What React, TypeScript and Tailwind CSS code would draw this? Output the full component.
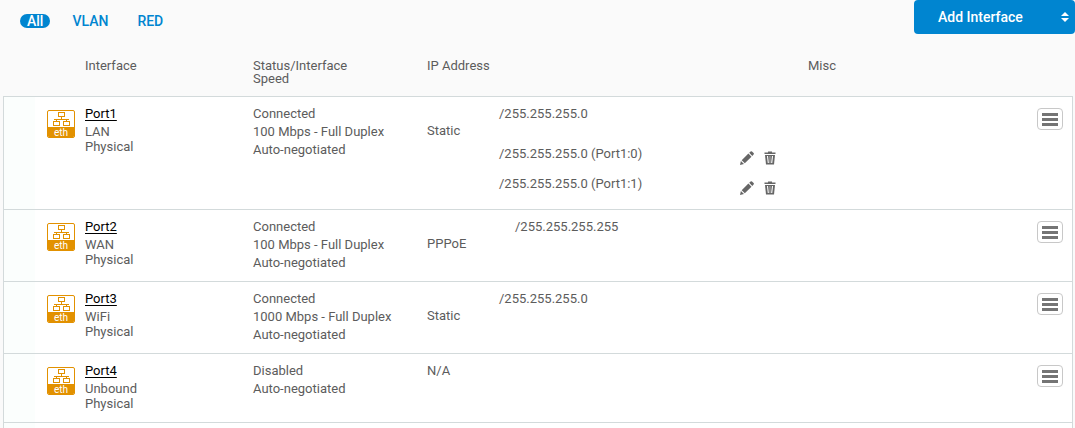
import React, { useState } from "react";
import clsx from "clsx";

interface Alias {
  address: string;
}

interface PortRecord {
  name: string;
  zone: string;
  type: string;
  status: string[];
  mode: string;
  address?: string;
  indent?: boolean;
  aliases: Alias[];
}

const ports: PortRecord[] = [
  {
    name: "Port1",
    zone: "LAN",
    type: "Physical",
    status: ["Connected", "100 Mbps - Full Duplex", "Auto-negotiated"],
    mode: "Static",
    address: "/255.255.255.0",
    aliases: [
      { address: "/255.255.255.0 (Port1:0)" },
      { address: "/255.255.255.0 (Port1:1)" },
    ],
  },
  {
    name: "Port2",
    zone: "WAN",
    type: "Physical",
    status: ["Connected", "100 Mbps - Full Duplex", "Auto-negotiated"],
    mode: "PPPoE",
    address: "/255.255.255.255",
    indent: true,
    aliases: [],
  },
  {
    name: "Port3",
    zone: "WiFi",
    type: "Physical",
    status: ["Connected", "1000 Mbps - Full Duplex", "Auto-negotiated"],
    mode: "Static",
    address: "/255.255.255.0",
    aliases: [],
  },
  {
    name: "Port4",
    zone: "Unbound",
    type: "Physical",
    status: ["Disabled", "Auto-negotiated"],
    mode: "N/A",
    aliases: [],
  },
];

const filters = ["All", "VLAN", "RED"];

const EthIcon: React.FC = () => (
  <span className="block size-7 rounded-xs border border-[#e29100] bg-white overflow-hidden">
    <svg viewBox="0 0 26 16" className="block w-full h-4" fill="none" stroke="#e29100" shapeRendering="crispEdges">
      <path d="M10.5 1.5h6v4h-6zM5.5 10.5h6v4h-6zM15.5 10.5h6v4h-6z" />
      <path d="M13.5 6v2M6 8.5h15M8.5 8v2M18.5 8v2" />
    </svg>
    <span className="block h-[10px] bg-[#e29100] text-white text-[10px] leading-[11px] text-center">eth</span>
  </span>
);

const PencilIcon: React.FC = () => (
  <svg viewBox="0 0 14 14" className="size-3.5" fill="#666">
    <path d="M0 14l.9-4L4 13.100zM1.700 9.200L8.400 2.600l3.100 3.100-6.700 6.600zM9.200 1.800L10.600.5q.7-.6 1.400 0l1.600 1.600q.6.7 0 1.400L12.300 4.900z" />
  </svg>
);

const TrashIcon: React.FC = () => (
  <svg viewBox="0 0 12 14" className="w-3 h-3.5">
    <path d="M.5 1.500h3.500V.5h4v1h3.500v1.500H.5z" fill="#666" />
    <path d="M1 4h10l-1 9.500H2z" fill="#666" />
    <path d="M3.500 5l.8 7M8.500 5l-.8 7" stroke="#fff" strokeWidth="1.1" />
    <path d="M6 5v7" stroke="#fff" strokeWidth=".5" />
  </svg>
);

const PortRow: React.FC<{ port: PortRecord }> = ({ port }) => (
  <tr className="bg-white align-top leading-[18px]">
    <td className="border-b border-l border-[#d3dadb] bg-[#fbfefd]"></td>
    <td className="border-b border-[#d3dadb] pt-[13px] pl-3">
      <EthIcon />
    </td>
    <td className="border-b border-[#d3dadb] pt-2 pb-[11px]">
      <a href="#" className="block w-fit text-black underline underline-offset-2">
        {port.name}
      </a>
      <div className="mt-px leading-[15px]">{port.zone}</div>
      <div className="leading-[15px]">{port.type}</div>
    </td>
    <td className="border-b border-[#d3dadb] pt-2 pb-[9px]">
      {port.status.map((line) => (
        <div key={line}>{line}</div>
      ))}
    </td>
    <td className={clsx("border-b border-[#d3dadb]", port.address ? "pt-[25px]" : "pt-2")}>{port.mode}</td>
    <td className="border-b border-[#d3dadb] pt-2 pb-[10px]">
      {port.address && <div className={clsx(port.indent && "pl-4")}>{port.address}</div>}
      {port.aliases.length > 0 && (
        <ul className="mt-4">
          {port.aliases.map((a) => (
            <li key={a.address} className="flex h-[30px] items-center">
              <span className="w-[241px]">{a.address}</span>
              <span className="flex items-center gap-[10px] pt-2">
                <button type="button" aria-label={"Edit " + a.address}>
                  <PencilIcon />
                </button>
                <button type="button" aria-label={"Delete " + a.address}>
                  <TrashIcon />
                </button>
              </span>
            </li>
          ))}
        </ul>
      )}
    </td>
    <td className="border-b border-r border-[#d3dadb] pt-[11px] pr-[9px]">
      <button
        type="button"
        aria-label={"Menu for " + port.name}
        className="ml-auto flex h-[22px] w-[26px] flex-col items-center justify-center gap-0.5 rounded border border-[#c8c8c8] bg-white"
      >
        <span className="h-[3px] w-4 bg-[#747474]" />
        <span className="h-[3px] w-4 bg-[#747474]" />
        <span className="h-[3px] w-4 bg-[#747474]" />
      </button>
    </td>
  </tr>
);

export default function App() {
  const [filter, setFilter] = useState("All");

  return (
    <div className="min-h-screen bg-[#fafafa] font-['Roboto','Liberation_Sans',sans-serif] text-[13px] text-[#5c5c5c]">
      <header className="flex items-start justify-between">
        <nav className="flex items-center gap-[15px] pt-[14px] pl-5">
          {filters.map((f) => (
            <button
              key={f}
              type="button"
              onClick={() => setFilter(f)}
              className={clsx(
                "rounded-full px-[7px] text-sm leading-[14px] font-medium",
                f === filter ? "bg-[#0085d0] text-white" : "text-[#0085d0]"
              )}
            >
              {f}
            </button>
          ))}
        </nav>
        <button
          type="button"
          aria-haspopup="menu"
          className="flex h-[34px] w-[161px] items-center rounded bg-[#0085d0] pr-1.5 pl-6 text-sm font-medium text-white"
        >
          <span className="flex-1 text-left">Add Interface</span>
          <svg viewBox="0 0 8 10" className="w-2 h-2.5" fill="#fff">
            <path d="M4 0l4 4H0zM4 10l4-4H0z" />
          </svg>
        </button>
      </header>

      <div className="ml-[3px] mr-0.5">
        <table className="w-full table-fixed border-separate border-spacing-0 text-left">
          <colgroup>
            <col className="w-8" />
            <col className="w-[50px]" />
            <col className="w-[168px]" />
            <col className="w-[174px]" />
            <col className="w-[72px]" />
            <col className="w-[309px]" />
            <col />
          </colgroup>
          <thead>
            <tr className="align-top leading-[13px]">
              <th className="border-b border-[#d3dadb]" colSpan={2}></th>
              <th className="border-b border-[#d3dadb] pt-[25px] pb-[11px] font-normal">Interface</th>
              <th className="border-b border-[#d3dadb] pt-[25px] pb-[11px] font-normal">
                Status/Interface
                <br />
                Speed
              </th>
              <th className="border-b border-[#d3dadb] pt-[25px] font-normal" colSpan={2}>
                IP Address
              </th>
              <th className="border-b border-[#d3dadb] pt-[25px] font-normal">Misc</th>
            </tr>
          </thead>
          <tbody>
            {ports.map((p) => (
              <PortRow key={p.name} port={p} />
            ))}
            <tr className="h-[5px] bg-white">
              <td className="border-l border-[#d3dadb] bg-[#fbfefd]"></td>
              <td className="border-r border-[#d3dadb]" colSpan={6}></td>
            </tr>
          </tbody>
        </table>
      </div>
    </div>
  );
}
